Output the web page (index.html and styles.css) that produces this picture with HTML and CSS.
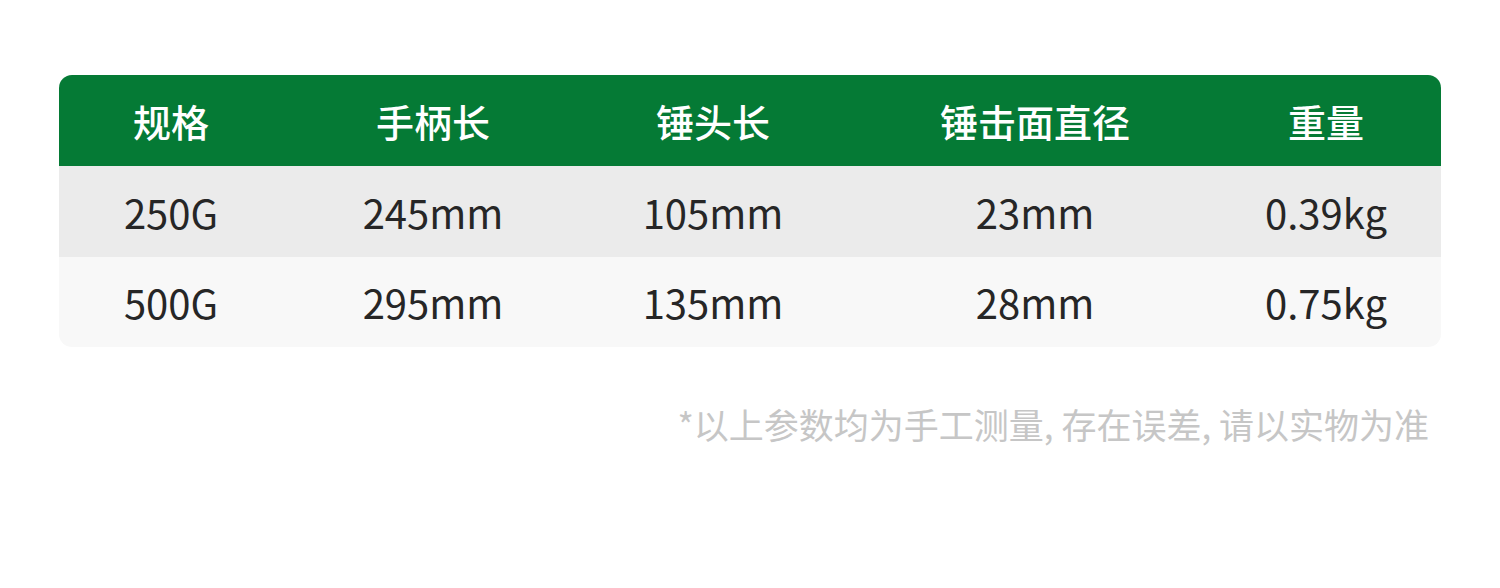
FILE: index.html
```html
<!DOCTYPE html>
<html lang="zh-CN">
<head>
<meta charset="utf-8">
<title>规格参数</title>
<link rel="stylesheet" href="styles.css">
</head>
<body>
<div class="page">
  <div class="spec">
    <div class="row head">
      <div class="cell">规格</div>
      <div class="cell">手柄长</div>
      <div class="cell">锤头长</div>
      <div class="cell">锤击面直径</div>
      <div class="cell">重量</div>
    </div>
    <div class="row odd">
      <div class="cell">250G</div>
      <div class="cell">245mm</div>
      <div class="cell">105mm</div>
      <div class="cell">23mm</div>
      <div class="cell">0.39kg</div>
    </div>
    <div class="row even">
      <div class="cell">500G</div>
      <div class="cell">295mm</div>
      <div class="cell">135mm</div>
      <div class="cell">28mm</div>
      <div class="cell">0.75kg</div>
    </div>
  </div>
  <p class="note">*以上参数均为手工测量, 存在误差, 请以实物为准</p>
</div>
</body>
</html>
```
FILE: styles.css
```css
html, body {
  margin: 0;
  padding: 0;
  background: #ffffff;
}
body {
  font-family: "Noto Sans CJK SC", "Noto Sans", sans-serif;
  width: 1500px;
  height: 588px;
  overflow: hidden;
}
.page {
  padding: 75px 59px 0 59px;
}
.spec {
  width: 1382px;
  border-radius: 13px;
  overflow: hidden;
}
.row {
  display: grid;
  grid-template-columns: 224px 300px 260px 384px 198px 16px;
  align-items: center;
}
.row::after {
  content: "";
}
.head {
  background: #057a35;
  height: 91px;
}
.head .cell {
  color: #ffffff;
  font-size: 38px;
  font-weight: 500;
}
.odd {
  background: #ebebeb;
  height: 91px;
}
.even {
  background: #f8f8f8;
  height: 90px;
}
.cell {
  text-align: center;
  color: #262626;
  font-size: 40px;
  line-height: 1;
}
.note {
  margin: 59px 12px 0 0;
  text-align: right;
  color: #c6c6c6;
  font-size: 35px;
  line-height: 1;
}
```
